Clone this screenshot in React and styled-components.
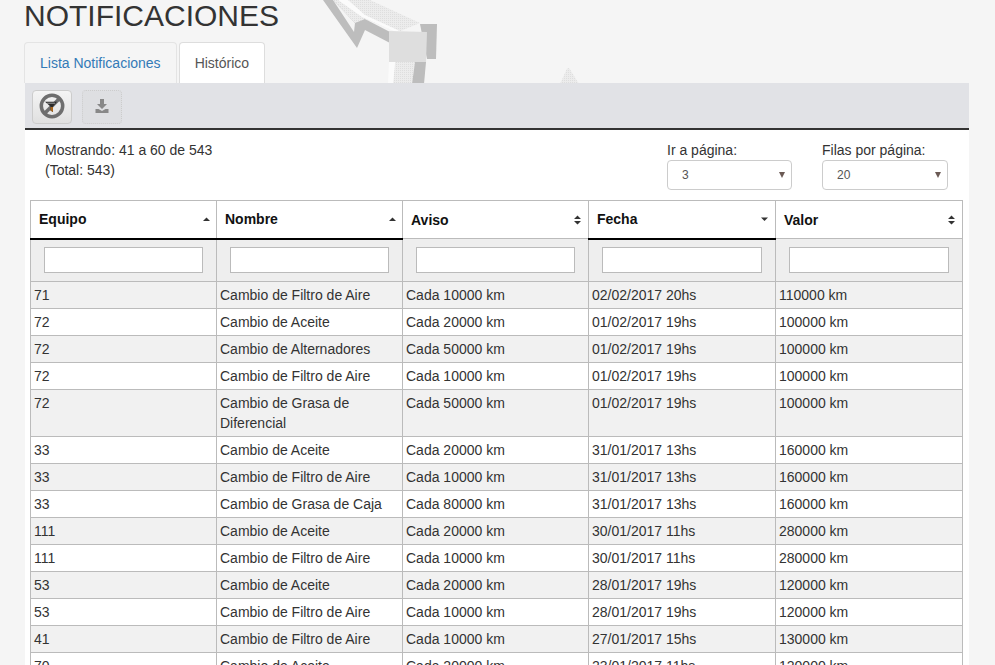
import styled, { createGlobalStyle } from "styled-components";

const GlobalStyle = createGlobalStyle`
    html, body {
        margin: 0;
        height: 665px;
        overflow: hidden;
        background-color: #f5f5f5;
        font-family: "Liberation Sans", Arial, sans-serif;
        font-size: 14px;
        line-height: 20px;
        color: #333;
    }
    * {
        box-sizing: border-box;
    }
`;

const Page = styled.div`
    position: relative;
    padding: 0 26px 0 24px;
`;

const Backdrop = styled.svg`
    position: absolute;
    top: 0;
    left: 0;
    width: 995px;
    height: 90px;
`;

const Title = styled.h1`
    position: relative;
    margin: 0;
    height: 42px;
    font-size: 30px;
    font-weight: 400;
    line-height: 31px;
    color: #333;
`;

const Tabs = styled.ul`
    position: relative;
    display: flex;
    gap: 2px;
    margin: 0;
    padding: 0;
    list-style: none;
`;

const Tab = styled.li`
    height: 41px;
    padding: 10px 15px;
    border: 1px solid ${(p) => (p.$active ? "#ddd" : "#e4e4e4")};
    border-bottom: 0;
    border-radius: 4px 4px 0 0;
    background-color: ${(p) => (p.$active ? "#fff" : "#f5f5f5")};
    color: ${(p) => (p.$active ? "#555" : "#337ab7")};
`;

const Panel = styled.div`
    position: relative;
    margin-left: 1px;
    background-color: #fff;
`;

const Toolbar = styled.div`
    display: flex;
    gap: 10px;
    height: 47px;
    padding: 7px 7px 0;
    background-color: #e1e2e6;
    border-bottom: 2px solid #333;
`;

const ToolButton = styled.button`
    display: flex;
    align-items: center;
    justify-content: center;
    width: 40px;
    height: 34px;
    padding: 0 0 2px;
    border: 1px ${(p) => (p.disabled ? "dotted #ccc" : "solid #ccc")};
    border-radius: 4px;
    background-color: ${(p) => (p.disabled ? "#dedfe2" : "#eee")};
    background-image: ${(p) =>
        p.disabled ? "none" : "linear-gradient(#f4f4f4, #e0e0e0)"};
`;

const InfoBar = styled.div`
    display: flex;
    height: 70px;
    padding: 10px 21px 0 20px;
`;

const Summary = styled.div`
    flex: 1;
`;

const Control = styled.label`
    display: block;
    width: ${(p) => p.$width}px;
    margin-left: 30px;
    line-height: 20px;
`;

const SelectWrap = styled.div`
    position: relative;
    height: 30px;

    &::after {
        content: "";
        position: absolute;
        top: 12px;
        right: 7px;
        border-left: 3px solid transparent;
        border-right: 3px solid transparent;
        border-top: 6px solid #6b5a55;
    }
`;

const Select = styled.select`
    display: block;
    width: 100%;
    height: 30px;
    padding: 0 0 0 14px;
    appearance: none;
    border: 1px solid #ccc;
    border-radius: 4px;
    background-color: #fff;
    font-family: inherit;
    font-size: 12px;
    color: #555;
`;

const TableWrap = styled.div`
    padding: 0 6px 0 5px;
`;

const Table = styled.table`
    width: 932px;
    border-collapse: collapse;
    table-layout: fixed;
`;

const HeadCell = styled.th`
    position: relative;
    width: ${(p) => p.$width}px;
    height: 38px;
    padding: ${(p) => (p.$sort ? "0 8px" : "1px 8px 0")};
    border: 1px solid #bbb;
    border-bottom: ${(p) => (p.$sort ? "2px solid #000" : "1px solid #bbb")};
    background-color: #fff;
    font-size: 14px;
    font-weight: 700;
    text-align: left;
    color: #111;
`;

const SortArrow = styled.svg`
    position: absolute;
    top: 50%;
    right: 6px;
    width: 8px;
    height: 10px;
    margin-top: -5px;
    fill: #333;
`;

const FilterCell = styled.td`
    height: 43px;
    padding: 0 13px 1px;
    border: 1px solid #bbb;
    background-color: #eee;
`;

const FilterInput = styled.input`
    display: block;
    width: 100%;
    height: 26px;
    border: 1px solid #bbb;
    background-color: #fff;
`;

const Row = styled.tr`
    background-color: ${(p) => (p.$odd ? "#f1f1f1" : "#fff")};
`;

const Cell = styled.td`
    padding: 3px;
    border: 1px solid #bbb;
    vertical-align: top;
    color: #333;
`;

const columns = [
    { label: "Equipo", width: 186, sort: "up" },
    { label: "Nombre", width: 186, sort: "up" },
    { label: "Aviso", width: 186 },
    { label: "Fecha", width: 187, sort: "down" },
    { label: "Valor", width: 187 },
];

const rows = [
    ["71", "Cambio de Filtro de Aire", "Cada 10000 km", "02/02/2017 20hs", "110000 km"],
    ["72", "Cambio de Aceite", "Cada 20000 km", "01/02/2017 19hs", "100000 km"],
    ["72", "Cambio de Alternadores", "Cada 50000 km", "01/02/2017 19hs", "100000 km"],
    ["72", "Cambio de Filtro de Aire", "Cada 10000 km", "01/02/2017 19hs", "100000 km"],
    ["72", "Cambio de Grasa de Diferencial", "Cada 50000 km", "01/02/2017 19hs", "100000 km"],
    ["33", "Cambio de Aceite", "Cada 20000 km", "31/01/2017 13hs", "160000 km"],
    ["33", "Cambio de Filtro de Aire", "Cada 10000 km", "31/01/2017 13hs", "160000 km"],
    ["33", "Cambio de Grasa de Caja", "Cada 80000 km", "31/01/2017 13hs", "160000 km"],
    ["111", "Cambio de Aceite", "Cada 20000 km", "30/01/2017 11hs", "280000 km"],
    ["111", "Cambio de Filtro de Aire", "Cada 10000 km", "30/01/2017 11hs", "280000 km"],
    ["53", "Cambio de Aceite", "Cada 20000 km", "28/01/2017 19hs", "120000 km"],
    ["53", "Cambio de Filtro de Aire", "Cada 10000 km", "28/01/2017 19hs", "120000 km"],
    ["41", "Cambio de Filtro de Aire", "Cada 10000 km", "27/01/2017 15hs", "130000 km"],
    ["70", "Cambio de Aceite", "Cada 20000 km", "23/01/2017 11hs", "120000 km"],
];

function Sort({ dir }) {
    return (
        <SortArrow viewBox="0 0 8 10">
            {dir === "up" && <path d="M1 7 L4.5 3.5 L8 7 Z" />}
            {dir === "down" && <path d="M0 3.5 L7 3.5 L3.5 7 Z" />}
            {!dir && <path d="M0 4 L3.5 0.5 L7 4 Z M0 6 L7 6 L3.5 9.5 Z" />}
        </SortArrow>
    );
}

function App() {
    return (
        <>
            <GlobalStyle />
            <Page>
                <Backdrop viewBox="0 0 995 90">
                    <defs>
                        <pattern id="dots" width="2" height="2" patternUnits="userSpaceOnUse">
                            <rect width="2" height="2" fill="#ececec" />
                            <rect width="1" height="1" fill="#dedede" />
                        </pattern>
                    </defs>
                    <path d="M323 0 L357 48 L365 30 L390 43 L390 32 L365 19 L333 0 Z" fill="#bdbdbd" />
                    <path d="M333 0 L355 23 L354 32 Z" fill="#f4f4f4" />
                    <path d="M333 0 L355 23 L365 19 L398 32 L420 23 L370 0 Z" fill="url(#dots)" />
                    <path d="M348 0 L365 15 L402 32 L396 32 L362 17 L338 0 Z" fill="#fbfbfb" />
                    <path d="M420 24 L437 24 L436 59 L427 59 Z" fill="#bdbdbd" />
                    <path d="M389 31 L427 32 L426 62 L389 62 Z" fill="#dedede" />
                    <path d="M395 62 L415 62 L412 84 L393 84 Z" fill="url(#dots)" />
                    <path d="M389 62 L395 62 L393 84 L388 84 Z" fill="#fbfbfb" />
                    <path d="M415 62 L426 62 L424 84 L412 84 Z" fill="#bdbdbd" />
                    <path d="M567 68.5 Q568 67.5 569.5 68.5 L579 84 L560 84 Z" fill="url(#dots)" />
                </Backdrop>
                <Title>NOTIFICACIONES</Title>
                <Tabs>
                    <Tab>Lista Notificaciones</Tab>
                    <Tab $active>Histórico</Tab>
                </Tabs>
                <Panel>
                    <Toolbar>
                        <ToolButton>
                            <svg width="28" height="28" viewBox="0 0 28 28">
                                <circle cx="14" cy="14" r="10.7" fill="none" stroke="#6e6e6e" strokeWidth="3.5" />
                                <path d="M6.5 21.5 L21.5 6.5" stroke="#6e6e6e" strokeWidth="3.5" />
                                <path d="M7 9.8 H19 L15 14.5 V20 L12.5 18.5 V14.5 Z" fill="#2a2a2a" />
                                <path d="M9 11.2 H17" stroke="#bbb" strokeWidth="0.8" />
                                <path d="M12.5 15 H15 V20 L12.5 18.5 Z" fill="#a5651f" />
                            </svg>
                        </ToolButton>
                        <ToolButton disabled>
                            <svg width="16" height="16" viewBox="0 0 16 16" fill="#888">
                                <path d="M6 1 H10 V6 H13 L8 11 L3 6 H6 Z" />
                                <path d="M1.5 11 H4.5 L8 13 L11.5 11 H14.5 V15 H1.5 Z" />
                            </svg>
                        </ToolButton>
                    </Toolbar>
                    <InfoBar>
                        <Summary>
                            Mostrando: 41 a 60 de 543
                            <br />
                            (Total: 543)
                        </Summary>
                        <Control $width={125}>
                            Ir a página:
                            <SelectWrap>
                                <Select defaultValue="3">
                                    <option>3</option>
                                </Select>
                            </SelectWrap>
                        </Control>
                        <Control $width={126}>
                            Filas por página:
                            <SelectWrap>
                                <Select defaultValue="20">
                                    <option>20</option>
                                </Select>
                            </SelectWrap>
                        </Control>
                    </InfoBar>
                    <TableWrap>
                        <Table>
                            <thead>
                                <tr>
                                    {columns.map((col) => (
                                        <HeadCell key={col.label} $width={col.width} $sort={col.sort}>
                                            {col.label}
                                            <Sort dir={col.sort} />
                                        </HeadCell>
                                    ))}
                                </tr>
                                <tr>
                                    {columns.map((col) => (
                                        <FilterCell key={col.label}>
                                            <FilterInput type="text" />
                                        </FilterCell>
                                    ))}
                                </tr>
                            </thead>
                            <tbody>
                                {rows.map((row, index) => (
                                    <Row key={index} $odd={index % 2 === 0}>
                                        {row.map((value, i) => (
                                            <Cell key={i}>{value}</Cell>
                                        ))}
                                    </Row>
                                ))}
                            </tbody>
                        </Table>
                    </TableWrap>
                </Panel>
            </Page>
        </>
    );
}

export default App;
